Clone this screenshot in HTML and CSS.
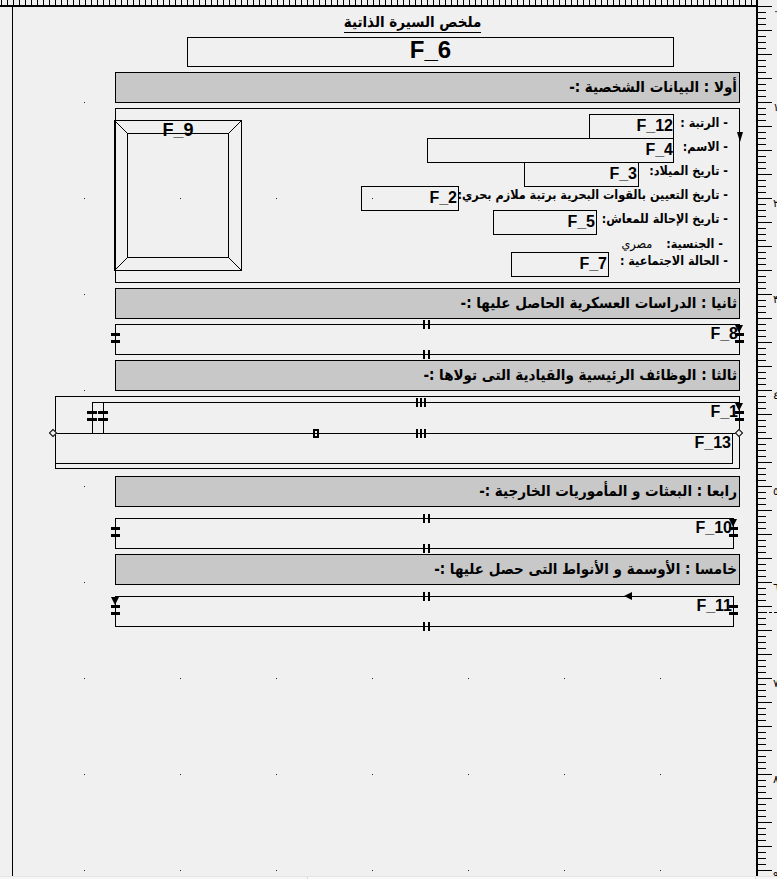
FILE: index.html
```html
<!DOCTYPE html>
<html lang="ar">
<head>
<meta charset="utf-8">
<title>Report layout</title>
<link rel="stylesheet" href="styles.css">
</head>
<body>
<div class="app">
  <div class="hruler"></div>
  <div class="rruler">
    <div class="rl-labels">
      <span>٠</span><span>١</span><span>٢</span><span>٣</span><span>٤</span><span>٥</span><span>٦</span><span>٧</span><span>٨</span><span>٩</span>
    </div>
    <div class="rl-dash"></div>
  </div>
  <div class="canvas">
    <div class="sheet">
      <div class="col">
        <div class="title"><span class="ar" dir="rtl">ملخص السيرة الذاتية</span></div>
        <div class="f6">F_6</div>

        <div class="hdr ar" dir="rtl">أولا : البيانات الشخصية :-</div>
        <div class="personal">
          <div class="photo">
            <svg width="128" height="151" viewBox="0 0 128 151">
              <rect x="0.5" y="0.5" width="127" height="150" fill="none" stroke="#000"/>
              <rect x="13.5" y="13.5" width="101" height="124" fill="none" stroke="#000"/>
              <path d="M0.5 0.5 L13.5 13.5 M127.5 0.5 L114.5 13.5 M0.5 150.5 L13.5 137.5 M127.5 150.5 L114.5 137.5" stroke="#000" fill="none"/>
            </svg>
            <span class="f9">F_9</span>
          </div>
          <div class="fields">
            <div class="frow"><div class="fbox w85">F_12</div><div class="flabel ar lw54" dir="rtl">- الرتبة :</div></div>
            <div class="frow"><div class="fbox w247">F_4</div><div class="flabel ar lw54" dir="rtl">- الاسم:</div></div>
            <div class="frow"><div class="fbox w115 pr1">F_3</div><div class="flabel ar lw89" dir="rtl">- تاريخ الميلاد:</div></div>
            <div class="frow"><div class="fbox w98 pr1">F_2</div><div class="flabel ar lw269" dir="rtl">- تاريخ التعيين بالقوات البحرية برتبة ملازم بحري:</div></div>
            <div class="frow"><div class="fbox w104 pr1">F_5</div><div class="flabel ar lw131" dir="rtl">- تاريخ الإحالة للمعاش:</div></div>
            <div class="frow nat"><div class="flabel ar natl" dir="rtl">- الجنسية:<span class="natv">مصري</span></div></div>
            <div class="frow"><div class="fbox w98 pr1">F_7</div><div class="flabel ar lw119" dir="rtl">- الحالة الاجتماعية :</div></div>
          </div>
        </div>

        <div class="hdr ar" dir="rtl">ثانيا : الدراسات العسكرية الحاصل عليها :-</div>
        <div class="rf full">
          <span class="ftxt">F_8</span>
          <span class="mk ii top mid"></span>
          <span class="mk ii bot mid"></span>
          <span class="mk eq lft"></span>
          <span class="mk tri rgt-full"></span>
          <span class="mk eq rgt-full"></span>
        </div>

        <div class="hdr ar" dir="rtl">ثالثا : الوظائف الرئيسية والقيادية التى تولاها :-</div>
        <div class="complex">
          <div class="f1box"><span class="ftxt">F_1</span></div>
          <div class="vline"></div>
          <div class="f13box"><span class="ftxt">F_13</span></div>
          <span class="mk iii c-top"></span>
          <span class="mk iii c-bot"></span>
          <span class="mk box8"></span>
          <span class="mk eq c-eq1"></span>
          <span class="mk eq c-eq2"></span>
          <span class="mk tri c-tri"></span>
          <span class="mk eq c-req"></span>
          <span class="mk dia c-dl"></span>
          <span class="mk dia c-dr"></span>
        </div>

        <div class="hdr ar h4" dir="rtl">رابعا : البعثات و المأموريات الخارجية :-</div>
        <div class="rf short f10">
          <span class="ftxt">F_10</span>
          <span class="mk ii top mid"></span>
          <span class="mk ii bot mid"></span>
          <span class="mk eq lft"></span>
          <span class="mk tri rgt-short"></span>
          <span class="mk eq rgt-short"></span>
        </div>

        <div class="hdr ar" dir="rtl">خامسا : الأوسمة و الأنواط التى حصل عليها :-</div>
        <div class="rf short f11">
          <span class="ftxt">F_11</span>
          <span class="mk ii top mid"></span>
          <span class="mk ii bot mid"></span>
          <span class="mk tri ltri"></span>
          <span class="mk eq lft"></span>
          <span class="mk eq rgt-short"></span>
          <span class="mk arrowl"></span>
        </div>
      </div>
    </div>
  </div>
  <div class="bstrip"><div class="bscroll"></div></div>
</div>
</body>
</html>
```
FILE: styles.css
```css
* { box-sizing: border-box; margin: 0; padding: 0; }
html, body { width: 777px; height: 879px; overflow: hidden; }
body {
  background: #f0f0f0;
  font-family: "Liberation Sans", "DejaVu Sans", sans-serif;
  color: #000;
}
.ar { font-family: "DejaVu Sans Condensed", "DejaVu Sans", sans-serif; }
.app {
  display: grid;
  grid-template-columns: 756px 21px;
  grid-template-rows: 7px 869px 3px;
  width: 777px;
  height: 879px;
}
.hruler {
  grid-column: 1;
  grid-row: 1;
  border-bottom: 2px solid #000;
  background: repeating-linear-gradient(to right, #000 0 1px, transparent 1px 6px);
  background-position: 1px 0;
}
.rruler {
  grid-column: 2;
  grid-row: 1 / 3;
  border-left: 2px solid #000;
  padding-top: 6px;
  position: relative;
  background-image:
    linear-gradient(to bottom, #000 0 1px, transparent 1px),
    linear-gradient(to bottom, #000 0 1px, transparent 1px);
  background-size: 14px 24px, 8px 6px;
  background-repeat: repeat-y;
  background-origin: content-box;
  background-clip: content-box;
  overflow: hidden;
}
.rl-labels {
  display: flex;
  flex-direction: column;
  padding-left: 15px;
  margin-top: -1px;
  font-size: 11px;
  line-height: 12px;
}
.rl-labels span { height: 96px; }
.rl-dash {
  position: absolute;
  left: 1px;
  top: 612px;
  width: 19px;
  height: 1px;
  background: repeating-linear-gradient(to right, #000 0 3px, transparent 3px 5px);
}
.canvas {
  grid-column: 1;
  grid-row: 2;
  padding-left: 12px;
  background-image: radial-gradient(circle at 0.5px 0.5px, #222 0.9px, transparent 0.9px);
  background-size: 96px 96px;
  background-position: 84px 95px;
}
.sheet {
  border-left: 1px solid #000;
  height: 100%;
  padding-left: 102px;
}
.col { width: 625px; }
.title {
  height: 30px;
  padding-top: 6px;
  padding-right: 30px;
  text-align: center;
}
.title span {
  display: inline-block;
  font-size: 15px;
  font-weight: bold;
  line-height: 19px;
  border-bottom: 1px solid #000;
}
.f6 {
  margin-left: 72px;
  width: 487px;
  height: 30px;
  border: 1px solid #000;
  text-align: center;
  font-size: 24px;
  font-weight: bold;
  line-height: 24px;
}
.hdr {
  margin-top: 5px;
  height: 31px;
  border: 1px solid #000;
  background: #c8c8c8;
  padding-right: 2px;
  text-align: right;
  font-size: 15px;
  font-weight: bold;
  line-height: 29px;
  white-space: nowrap;
}
.hdr.h4 { margin-top: 7px; }
.personal {
  margin-top: 5px;
  height: 175px;
  border: 1px solid #000;
  display: flex;
}
.photo {
  flex: none;
  position: relative;
  width: 128px;
  height: 151px;
  margin-left: -2px;
  margin-top: 11px;
}
.photo svg { display: block; }
.f9 {
  position: absolute;
  left: 0;
  right: 0;
  top: 0;
  text-align: center;
  font-size: 18px;
  font-weight: bold;
  line-height: 20px;
}
.fields {
  flex: 1;
  padding-top: 5px;
  padding-right: 11px;
  position: relative;
}
.fields::after {
  content: "";
  position: absolute;
  right: -4px;
  top: 23px;
  border-left: 3px solid transparent;
  border-right: 3px solid transparent;
  border-top: 10px solid #000;
}
.frow {
  display: flex;
  justify-content: flex-end;
  height: 24px;
}
.frow.nat { height: 18px; }
.fbox {
  flex: none;
  height: 25px;
  border: 1px solid #000;
  text-align: right;
  font-size: 16px;
  font-weight: bold;
  line-height: 20px;
  padding-top: 1px;
}
.fbox.pr1 { padding-right: 1px; }
.w85 { width: 85px; }
.w247 { width: 247px; }
.w115 { width: 115px; }
.w98 { width: 98px; }
.w104 { width: 104px; }
.flabel {
  flex: none;
  text-align: right;
  white-space: nowrap;
  font-size: 12.5px;
  font-weight: bold;
  line-height: 18px;
}
.lw54 { width: 54px; }
.lw89 { width: 89px; }
.lw269 { width: 269px; }
.lw131 { width: 131px; }
.lw119 { width: 119px; }
.natl { padding-right: 5px; padding-top: 1px; }
.natv { font-weight: normal; margin-right: 14px; }

/* repeating frames */
.rf {
  position: relative;
  margin-top: 5px;
  height: 31px;
  border: 1px solid #000;
  text-align: right;
}
.rf.full { width: 625px; }
.rf.short { width: 619px; }
.rf.f10, .rf.f11 { margin-top: 11px; }
.ftxt {
  display: inline-block;
  font-size: 16px;
  font-weight: bold;
  line-height: 18px;
  padding-right: 1px;
}
.complex {
  position: relative;
  margin-top: 5px;
  margin-left: -60px;
  width: 685px;
  height: 73px;
  border: 1px solid #000;
}
.f1box {
  position: absolute;
  left: 36px;
  top: 5px;
  width: 648px;
  height: 32px;
  border: 1px solid #000;
  text-align: right;
}
.vline {
  position: absolute;
  left: 47px;
  top: 5px;
  width: 1px;
  height: 32px;
  background: #000;
}
.f13box {
  position: absolute;
  left: -1px;
  top: 36px;
  width: 678px;
  height: 31px;
  border: 1px solid #000;
  text-align: right;
}

/* markers */
.mk { position: absolute; display: block; }
.ii {
  width: 7px;
  height: 9px;
  border-left: 2px solid #000;
  border-right: 2px solid #000;
}
.ii.mid { left: 307px; }
.ii.top { top: -5px; }
.ii.bot { top: 25px; }
.iii {
  width: 10px;
  height: 9px;
  background: repeating-linear-gradient(to right, #000 0 2px, transparent 2px 4px);
}
.c-top { left: 360px; top: 1px; }
.c-bot { left: 360px; top: 32px; }
.eq {
  width: 9px;
  height: 10px;
  border-top: 3px solid #000;
  border-bottom: 3px solid #000;
}
.eq.lft { left: -5px; top: 8px; }
.eq.rgt-full { left: 619px; top: 8px; }
.eq.rgt-short { left: 613px; top: 8px; }
.tri {
  width: 0;
  height: 0;
  border-left: 4px solid transparent;
  border-right: 4px solid transparent;
  border-top: 8px solid #000;
}
.tri.rgt-full { left: 619px; top: 0; }
.tri.rgt-short { left: 613px; top: 0; }
.tri.ltri { left: -5px; top: 0; }
.c-eq1 { left: 31px; top: 14px; width: 10px; }
.c-eq2 { left: 42px; top: 14px; width: 10px; }
.c-tri { left: 679px; top: 6px; }
.c-req { left: 679px; top: 14px; }
.box8 {
  left: 257px;
  top: 32px;
  width: 6px;
  height: 9px;
  border: 2px solid #000;
  background: linear-gradient(#000, #000) center / 100% 1px no-repeat;
}
.dia {
  width: 6px;
  height: 6px;
  border: 1px solid #000;
  background: #f0f0f0;
  transform: rotate(45deg);
}
.c-dl { left: -6px; top: 33px; }
.c-dr { left: 680px; top: 33px; }
.arrowl {
  left: 508px;
  top: -5px;
  width: 0;
  height: 0;
  border-top: 4px solid transparent;
  border-bottom: 4px solid transparent;
  border-right: 8px solid #000;
}

.bstrip {
  grid-column: 1 / 3;
  grid-row: 3;
  background: #f6f6f6;
  border-top: 1px solid #e4e4e4;
  padding-left: 307px;
}
.bscroll {
  width: 449px;
  height: 100%;
  background: #fafafa;
  border-left: 1px solid #d8d8d8;
  border-right: 1px solid #d8d8d8;
}
```
